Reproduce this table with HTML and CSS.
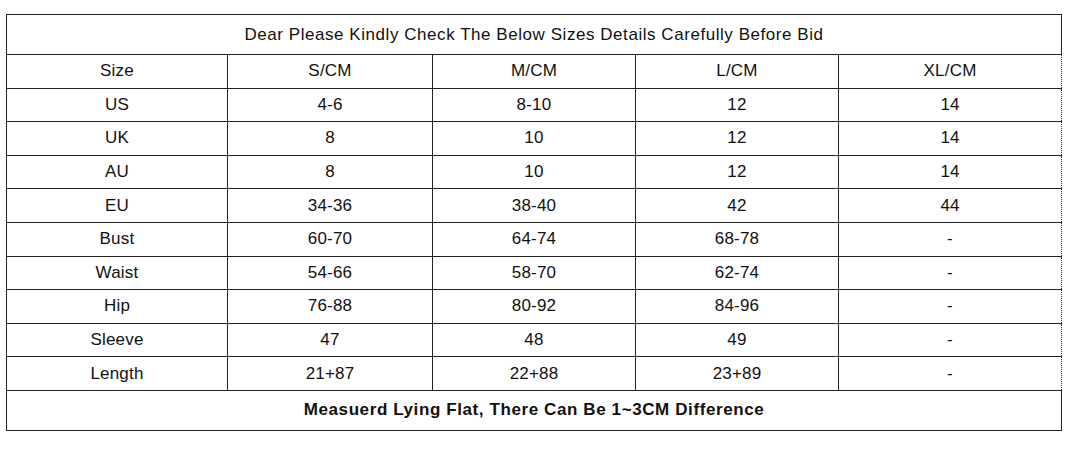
FILE: index.html
```html
<!DOCTYPE html>
<html>
<head>
<meta charset="utf-8">
<link rel="stylesheet" href="styles.css">
</head>
<body>
<table class="sizes">
  <colgroup>
    <col class="c1"><col class="c2"><col class="c3"><col class="c4"><col class="c5">
  </colgroup>
  <tr class="title"><td colspan="5">Dear Please Kindly Check The Below Sizes Details Carefully Before Bid</td></tr>
  <tr class="row"><td>Size</td><td>S/CM</td><td>M/CM</td><td>L/CM</td><td class="last">XL/CM</td></tr>
  <tr class="row"><td>US</td><td>4-6</td><td>8-10</td><td>12</td><td class="last">14</td></tr>
  <tr class="row"><td>UK</td><td>8</td><td>10</td><td>12</td><td class="last">14</td></tr>
  <tr class="row"><td>AU</td><td>8</td><td>10</td><td>12</td><td class="last">14</td></tr>
  <tr class="row"><td>EU</td><td>34-36</td><td>38-40</td><td>42</td><td class="last">44</td></tr>
  <tr class="row"><td>Bust</td><td>60-70</td><td>64-74</td><td>68-78</td><td class="last">-</td></tr>
  <tr class="row"><td>Waist</td><td>54-66</td><td>58-70</td><td>62-74</td><td class="last">-</td></tr>
  <tr class="row"><td>Hip</td><td>76-88</td><td>80-92</td><td>84-96</td><td class="last">-</td></tr>
  <tr class="row"><td>Sleeve</td><td>47</td><td>48</td><td>49</td><td class="last">-</td></tr>
  <tr class="row"><td>Length</td><td>21+87</td><td>22+88</td><td>23+89</td><td class="last">-</td></tr>
  <tr class="foot"><td colspan="5">Measuerd Lying Flat, There Can Be 1~3CM Difference</td></tr>
</table>
</body>
</html>
```
FILE: styles.css
```css
html, body {
  margin: 0;
  padding: 0;
  background: #ffffff;
}
body {
  padding: 14px 0 0 6px;
  font-family: "Liberation Sans", Arial, sans-serif;
  color: #111111;
}
.sizes {
  border-collapse: collapse;
  table-layout: fixed;
  width: 1055px;
  font-size: 17px;
}
.c1 { width: 221px; }
.c2 { width: 205px; }
.c3 { width: 203px; }
.c4 { width: 203px; }
.c5 { width: 223px; }
.sizes td {
  border: 1px solid #222222;
  text-align: center;
  padding: 0;
  vertical-align: middle;
  line-height: 20px;
  letter-spacing: 0.2px;
}
.sizes td.last {
  border-right: 1px dotted #333333;
}
.title { height: 40px; }
.title td { letter-spacing: 0.55px; }
.row { height: 33.6px; }
.foot { height: 40px; }
.foot td {
  font-weight: bold;
  letter-spacing: 0.6px;
}
```
